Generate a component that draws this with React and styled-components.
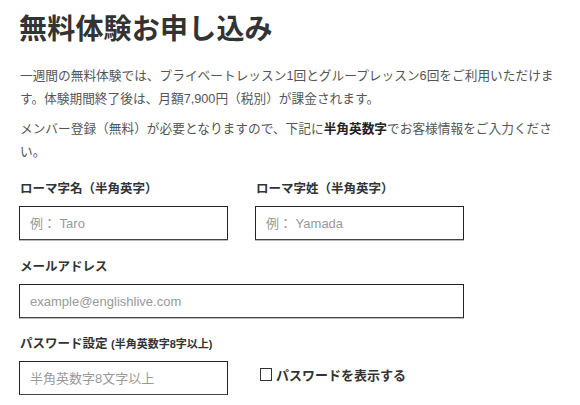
import React from "react";
import styled, { createGlobalStyle } from "styled-components";

const Global = createGlobalStyle`
  html, body { margin: 0; padding: 0; background: #fff; }
  body { font-family: "Liberation Sans", "Noto Sans CJK JP", sans-serif; }
  * { box-sizing: border-box; }
`;

const Page = styled.div`
  padding: 10px 20px 0 19px;
  width: 580px;
`;

const Title = styled.h1`
  margin: 0 0 21px 0;
  font-family: "Noto Sans CJK JP", sans-serif;
  font-size: 28px;
  line-height: 34px;
  font-weight: 700;
  color: #333;
  letter-spacing: 0.2px;
`;

const Para = styled.p`
  margin: 0 0 7px 0;
  max-width: 545px;
  font-size: 12.7px;
  line-height: 23px;
  color: #555;
  padding-left: 1px;
  & b { color: #222; font-weight: 700; }
`;

const Grid = styled.div`
  display: grid;
  grid-template-columns: 209px 209px;
  column-gap: 27px;
  margin-top: ${(p) => p.$top}px;
`;

const Field = styled.div`
  display: flex;
  flex-direction: column;
  grid-column: ${(p) => (p.$wide ? "1 / span 2" : "auto")};
`;

const Label = styled.label`
  display: block;
  font-size: 12.5px;
  line-height: 18px;
  font-weight: 700;
  color: #333;
  padding-left: 1px;
  margin-bottom: 8px;
  & small { font-size: 11px; font-weight: 700; }
`;

const Input = styled.input`
  width: 100%;
  height: 34px;
  border: 1px solid #222;
  border-bottom-color: #444;
  box-shadow: 0 1px 0 #bbb;
  padding: 0 10px;
  font-family: "Liberation Sans", "Noto Sans CJK JP", sans-serif;
  font-size: 13px;
  color: #333;
  background: #fff;
  outline: none;
  &::placeholder { color: #999; }
`;

const CheckRow = styled.label`
  display: flex;
  align-items: center;
  gap: 4px;
  padding-left: 5px;
  align-self: end;
  height: 34px;
  padding-bottom: 8px;
  font-size: 13px;
  font-weight: 700;
  color: #333;
`;

const Box = styled.span`
  width: 12px;
  height: 13px;
  border: 1.5px solid #333;
  display: inline-block;
  flex-shrink: 0;
`;

export default function App() {
  return (
    <>
      <Global />
      <Page>
        <Title>無料体験お申し込み</Title>
        <Para>
          一週間の無料体験では、プライベートレッスン1回とグループレッスン6回をご利用いただけます。体験期間終了後は、月額7,900円（税別）が課金されます。
        </Para>
        <Para>
          メンバー登録（無料）が必要となりますので、下記に<b>半角英数字</b>でお客様情報をご入力ください。
        </Para>
        <Grid $top={16}>
          <Field>
            <Label>ローマ字名（半角英字）</Label>
            <Input placeholder="例： Taro" />
          </Field>
          <Field>
            <Label>ローマ字姓（半角英字）</Label>
            <Input placeholder="例： Yamada" />
          </Field>
        </Grid>
        <Grid $top={18}>
          <Field $wide>
            <Label>メールアドレス</Label>
            <Input placeholder="example@englishlive.com" />
          </Field>
        </Grid>
        <Grid $top={17}>
          <Field>
            <Label>
              パスワード設定 <small>(半角英数字8字以上)</small>
            </Label>
            <Input type="password" placeholder="半角英数字8文字以上" />
          </Field>
          <CheckRow>
            <Box />
            パスワードを表示する
          </CheckRow>
        </Grid>
      </Page>
    </>
  );
}
